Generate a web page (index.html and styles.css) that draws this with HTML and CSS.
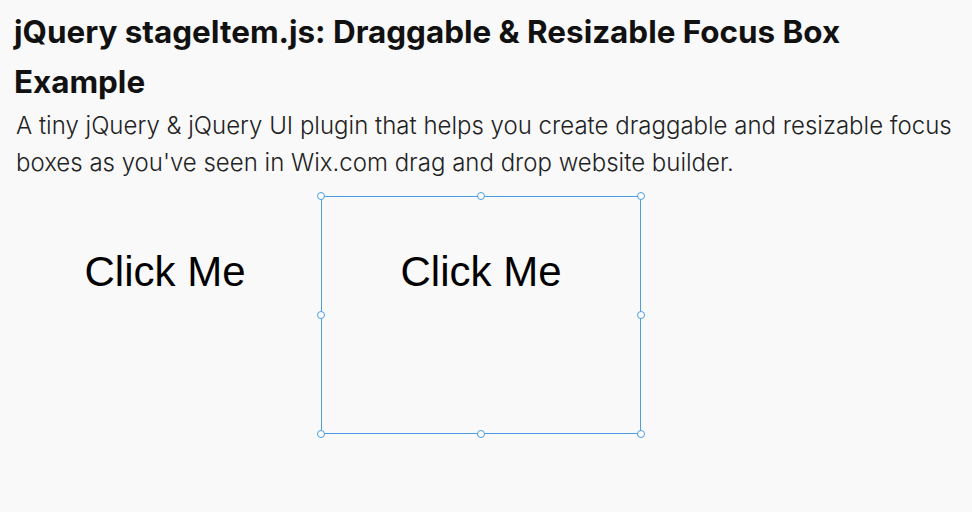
FILE: index.html
```html
<!DOCTYPE html>
<html>
<head>
<meta charset="utf-8">
<link rel="stylesheet" href="styles.css">
</head>
<body>
<h1 class="title">jQuery stageItem.js: Draggable &amp; Resizable Focus Box Example</h1>
<p class="lead">A tiny jQuery &amp; jQuery UI plugin that helps you create draggable and resizable focus boxes as you've seen in Wix.com drag and drop website builder.</p>
<div class="stage">
  <div class="item"><span class="label">Click Me</span></div>
  <div class="item focused">
    <span class="label">Click Me</span>
    <i class="h h-nw"></i><i class="h h-n"></i><i class="h h-ne"></i>
    <i class="h h-w"></i><i class="h h-e"></i>
    <i class="h h-sw"></i><i class="h h-s"></i><i class="h h-se"></i>
  </div>
</div>
</body>
</html>
```
FILE: styles.css
```css
html, body { margin: 0; padding: 0; }
body {
  background: #f9f9fa;
  color: #111;
  font-family: Inter, "Noto Sans", sans-serif;
  min-height: 512px;
}
.title {
  margin: 0;
  padding: 7px 14px 0;
  font-size: 31.4px;
  font-weight: 700;
  line-height: 50px;
  color: #111;
}
.lead {
  margin: 0;
  padding: 0 16px;
  font-size: 24px;
  font-weight: 300;
  line-height: 37px;
  color: #222;
}
.stage {
  display: flex;
  align-items: flex-start;
  padding: 15px 0 20px 5px;
}
.item {
  position: relative;
  width: 318px;
  height: 236px;
  border: 1px solid transparent;
  display: flex;
  justify-content: center;
  align-items: flex-start;
}
.item.focused { border-color: #4a9de6; margin-left: -4px; }
.label {
  margin-top: 52px;
  font-family: "Liberation Sans", Arial, sans-serif;
  font-size: 42px;
  line-height: 46px;
  color: #000;
}
.h {
  position: absolute;
  width: 6px;
  height: 6px;
  border: 1px solid #4a9de6;
  border-radius: 50%;
  background: #fff;
}
.h-nw { left: -5px; top: -5px; }
.h-n { left: calc(50% - 4px); top: -5px; }
.h-ne { right: -5px; top: -5px; }
.h-w { left: -5px; top: calc(50% - 4px); }
.h-e { right: -5px; top: calc(50% - 4px); }
.h-sw { left: -5px; bottom: -5px; }
.h-s { left: calc(50% - 4px); bottom: -5px; }
.h-se { right: -5px; bottom: -5px; }
```
